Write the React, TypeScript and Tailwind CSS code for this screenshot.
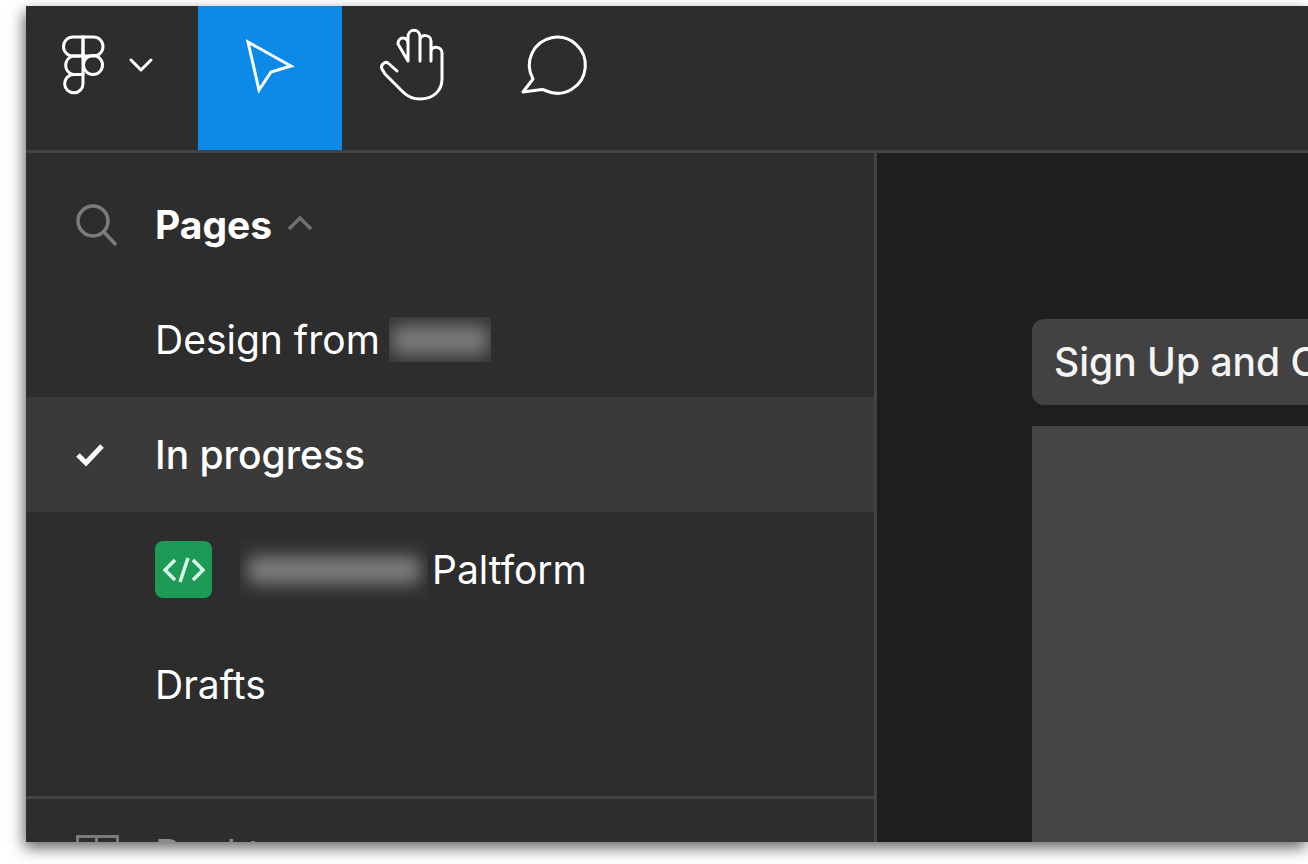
import React from 'react';

const FONT = 'font-["Inter","Noto_Sans",sans-serif]';

function FigmaMenu() {
  return (
    <div className="w-[172px] shrink-0">
      <svg width="172" height="144" viewBox="26 6 172 144" fill="none" stroke="#fff" strokeWidth="3">
        <path d="M83 37H73a9.500 9.500 0 0 0 0 19h10z" />
        <path d="M83 37h10.500a9.500 9.500 0 0 1 0 19H83z" />
        <path d="M83 56H73a9.500 9.500 0 0 0 0 18.500h10z" />
        <circle cx="93" cy="65" r="9.500" />
        <path d="M83 74.500H73a9.200 9.200 0 1 0 10 9.200z" />
        <path d="M131 60l10 10 10-10" strokeLinecap="round" strokeLinejoin="round" />
      </svg>
    </div>
  );
}

function ToolBar() {
  return (
    <header className="flex h-[147px] shrink-0 border-b-[3px] border-[#434343] bg-[#2d2d2d]">
      <FigmaMenu />
      <div className="w-[144px] shrink-0 bg-[#0d8ae8]">
        <svg width="144" height="144" viewBox="198 6 144 144" fill="none" stroke="#fff" strokeWidth="3" strokeLinejoin="miter">
          <path d="M248 42l43 24-20 6-12 18z" />
        </svg>
      </div>
      <div className="w-[144px] shrink-0">
        <svg width="144" height="144" viewBox="342 6 144 144" fill="none" stroke="#fff" strokeWidth="3" strokeLinecap="round" strokeLinejoin="round">
          <path d="M397 71l-9-8c-3-2-8 2-6 6l3 5 18 18c5 5 10 7 17 7 13 0 22-8 22-20V53c0-7-11-8-11-1m0 9V41c0-7-11-7-11-1v21m0 0V37c0-9-12-9-12 0v24m0 0V44c0-8-10-8-10 0z" />
        </svg>
      </div>
      <div className="w-[144px] shrink-0">
        <svg width="144" height="144" viewBox="486 6 144 144" fill="none" stroke="#fff" strokeWidth="3" strokeLinejoin="round">
          <path d="M533 79l-10 13 19-2.500c2 0 3 1 4.500 1.500A28 28 0 1 0 533 79z" />
        </svg>
      </div>
    </header>
  );
}

function Label({ children }: { children: React.ReactNode }) {
  return <span className="mt-[2px]">{children}</span>;
}

function PageRow({ children, active, icon }: { children: React.ReactNode; active?: boolean; icon?: React.ReactNode }) {
  return (
    <div className={`flex h-[115px] shrink-0 items-center text-[39px] text-white ${active ? 'bg-[#3a3a3a] font-medium' : ''}`}>
      <div className="flex w-[129px] shrink-0 justify-start pl-[50px]">{icon}</div>
      {children}
    </div>
  );
}

function Blurred({ className }: { className: string }) {
  // redacted name in the source shot
  return (
    <span className={`flex items-center justify-center overflow-hidden ${className}`}>
      <span className="h-[28px] w-[92%] rounded-[6px] bg-[#7a7a7a] blur-[8px]" />
    </span>
  );
}

function PagesPanel() {
  return (
    <aside className="flex w-[851px] shrink-0 flex-col overflow-hidden border-r-[3px] border-[#434343] bg-[#2d2d2d] pt-[14px]">
      <div className="flex h-[115px] shrink-0 items-center text-[39px] font-bold text-white">
        <div className="w-[129px] shrink-0 pl-[48px]">
          <svg width="44" height="46" viewBox="0 0 44 46" fill="none" stroke="#7b7b7b" strokeWidth="3.500">
            <circle cx="19" cy="19" r="15" />
            <path d="M30 30l12 13" />
          </svg>
        </div>
        <Label>Pages</Label>
        <svg className="ml-[15px] mt-[-3px]" width="26" height="16" viewBox="0 0 26 16" fill="none" stroke="#6f6f6f" strokeWidth="3.500">
          <path d="M2 14L13 3l11 11" />
        </svg>
      </div>
      <PageRow>
        <Label>Design from</Label>
        <Blurred className="ml-[9px] h-[45px] w-[102px] bg-[#383838]" />
      </PageRow>
      <PageRow
        active
        icon={
          <svg width="30" height="24" viewBox="0 0 30 24" fill="none" stroke="#fff" strokeWidth="5">
            <path d="M2 12l8 8L26 3" />
          </svg>
        }
      >
        <Label>In progress</Label>
      </PageRow>
      <PageRow>
        <span className="flex h-[57px] w-[57px] shrink-0 items-center justify-center rounded-[8px] bg-[#1c9a56]">
          <svg width="44" height="30" viewBox="0 0 44 30" fill="none" stroke="#dcfbe9" strokeWidth="3.500">
            <path d="M13 5L3 15l10 10M26 3l-8 24M31 5l10 10-10 10" />
          </svg>
        </span>
        <Blurred className="ml-[28px] h-[59px] w-[188px] bg-[#303030]" />
        <span className="ml-[4px] mt-[2px]">Paltform</span>
      </PageRow>
      <PageRow>
        <Label>Drafts</Label>
      </PageRow>
      <div className="mt-[54px] flex shrink-0 items-start border-t-[3px] border-[#434343] pt-[36px] text-[39px] text-[#8b8b8b]">
        <div className="w-[129px] shrink-0 pl-[50px]">
          <div className="grid h-[34px] w-[43px] grid-cols-2 border-[3px] border-[#7b7b7b]">
            <span className="border-r-[3px] border-[#7b7b7b]" />
          </div>
        </div>
        <span className="mt-[-3px] leading-[44px]">Desktop</span>
      </div>
    </aside>
  );
}

function Canvas() {
  return (
    <main className="flex flex-1 flex-col overflow-hidden bg-[#1e1e1e] pl-[155px] pt-[166px]">
      <div className="flex h-[86px] w-[400px] shrink-0 items-center whitespace-nowrap rounded-l-[12px] bg-[#424242] pl-[22px] text-[39px] font-medium text-[#f4f4f4]">
        Sign Up and Create Account
      </div>
      <div className="mt-[21px] flex-1 bg-[#444444]" />
    </main>
  );
}

export default function App() {
  return (
    <div className={`h-[864px] w-[1308px] overflow-hidden bg-white pb-[22px] pl-[26px] pt-[6px] ${FONT}`}>
      <div className="flex h-full flex-col overflow-hidden shadow-[-2px_6px_14px_rgba(0,0,0,0.6)]">
        <ToolBar />
        <div className="flex min-h-0 flex-1">
          <PagesPanel />
          <Canvas />
        </div>
      </div>
    </div>
  );
}
